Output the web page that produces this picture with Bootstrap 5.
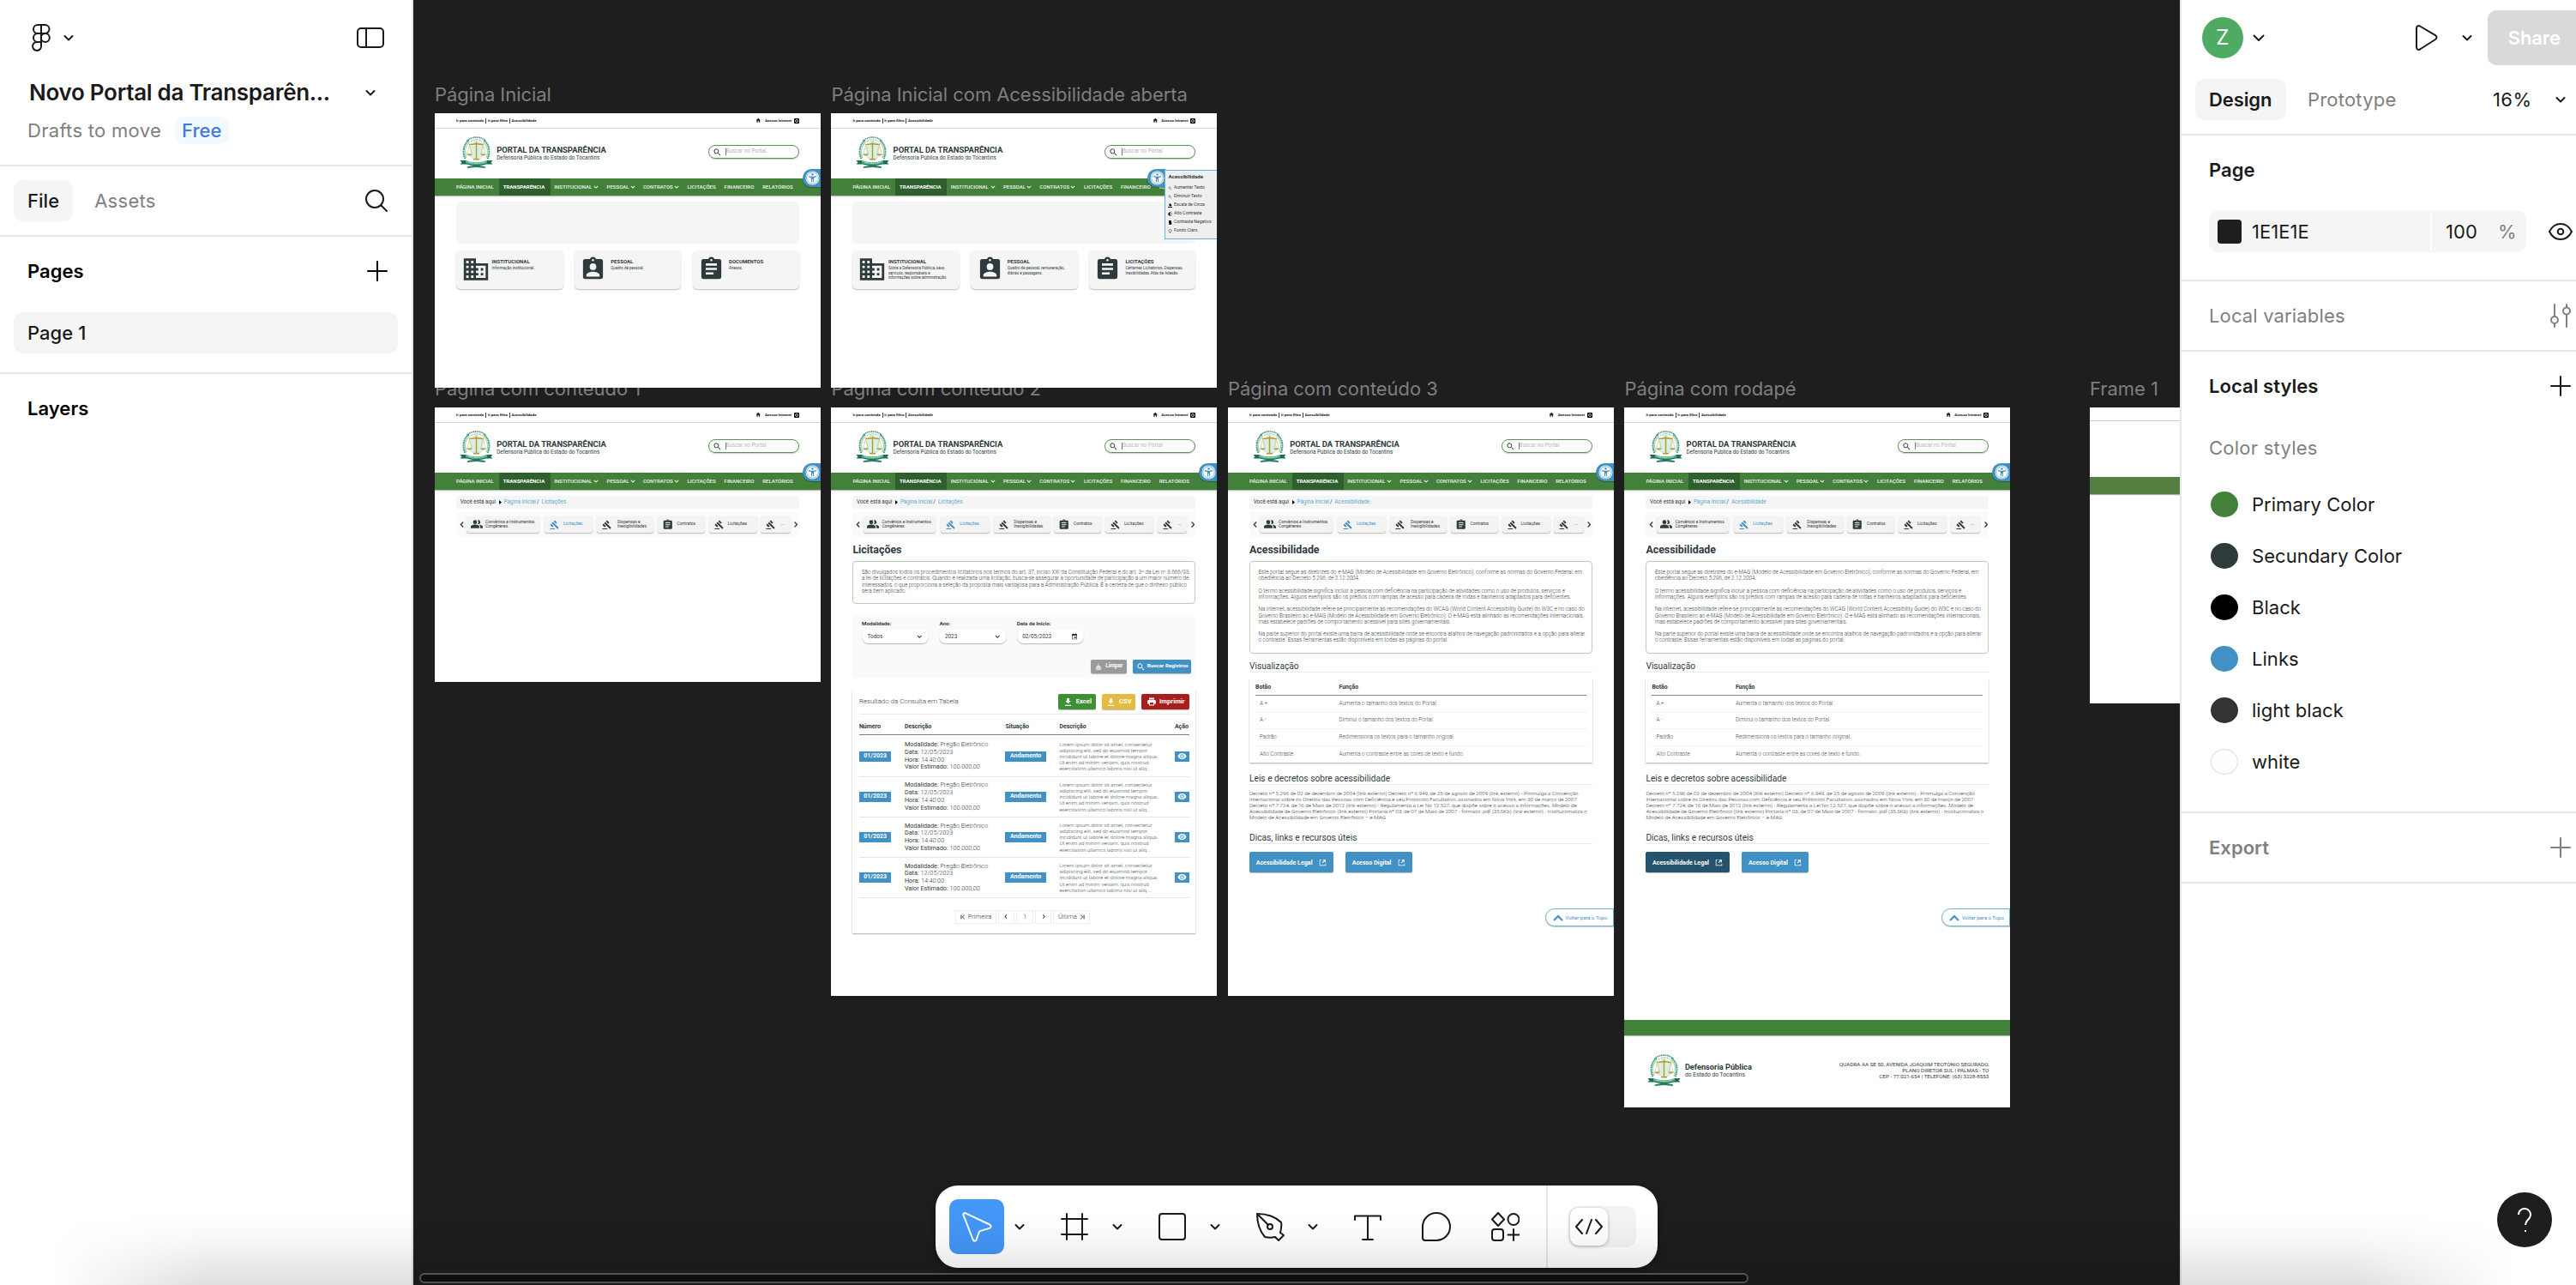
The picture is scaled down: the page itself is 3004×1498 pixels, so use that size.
<!DOCTYPE html>
<html lang="pt-BR">
<head>
<meta charset="utf-8">
<title>Novo Portal da Transparência</title>
<link href="https://cdn.jsdelivr.net/npm/bootstrap@5.3.0/dist/css/bootstrap.min.css" rel="stylesheet">
<style>
:root{--ink:#1a1a1a;--dim:#808080;--rule:#e6e6e6;--chip:#f5f5f5;--green:#43803a;--blue:#4191c4;--slate:#2f3a3c}
html,body{height:100%;margin:0}
body{font-family:Inter,"Liberation Sans",sans-serif;font-size:22px;line-height:32px;color:var(--ink);overflow:hidden;background:#1e1e1e;letter-spacing:.04px}
svg{display:block;flex:none}
.ln{fill:none;stroke:currentColor;stroke-width:2;stroke-linecap:round;stroke-linejoin:round}
.fw-mid{font-weight:550}
.dim{color:var(--dim)}
.app{width:3004px;height:1498px}
.side{background:#fff;flex:none}
.side-l{width:482px;border-right:2px solid var(--rule)}
.side-r{width:462px;border-left:2px solid var(--rule);overflow:hidden}
.side-r .wide{width:476px}
.sec{border-bottom:2px solid var(--rule)}
.pill{height:48px;padding:8px 16px;border-radius:10px;background:var(--chip)}
.filehead{height:194px;padding:0 32px}
.doc-title{font-size:26px;font-weight:600;letter-spacing:-.29px;color:var(--ink)}
.plan{background:#f2f9ff;color:#3d7be0;border-radius:10px;padding:0 8px;height:32px;font-weight:500}
.dot{width:32px;height:30px;border-radius:50%;margin:0 16px 0 2px}
.style-row{height:60px}
.stage{position:relative;overflow:hidden;background:#1e1e1e}
.tag{position:absolute;color:#7e7e7e;white-space:nowrap;font-size:22px;line-height:28px;letter-spacing:-.06px}
/* mock pages */
.pg{position:absolute;width:450px;background:#fff;overflow:hidden;font-family:Roboto,sans-serif;letter-spacing:0;color:var(--slate);font-size:6.25px;line-height:7.2px;white-space:nowrap}
.in{padding:0 25px}
.pg-top{height:18px;border-bottom:1px solid #d5d5d5;font-size:4.4px;font-weight:700;color:#222;line-height:6px}
.pg-top .bar{width:.6px;height:6px;background:#444;margin:0 2px}
.pg-brand{height:58px}
.pg-brand .ttl{font-size:9.45px;font-weight:700;line-height:10px}
.pg-brand .sub{font-size:6.3px;line-height:9px}
.find{width:106.5px;height:16.5px;border:1px solid #5b9354;border-radius:9px;box-shadow:0 1px 1px #0003;color:#b5b5b5;font-size:6.35px;margin-top:3px}
.caret{border-left:.6px solid #777;padding-left:0}
.pg-nav{height:20px;background:var(--green);color:#f0f6ef;font-weight:500;font-size:6.05px;box-shadow:0 1px 1.2px #0005;position:relative}
.pg-nav span{display:flex;align-items:center;height:20px}
.pg-nav .on{background:#2f5f2d;font-weight:700;color:#fff}
.a11y{position:absolute;top:65px;height:21px;width:21px;right:0;background:var(--blue);border-radius:11px 0 0 11px;display:flex;align-items:center;padding-left:3px;box-shadow:0 1px 1px #0004}
.hero{height:48.5px;border-radius:5px;background:#f5f5f5;margin-top:7px}
.tile{width:124.5px;height:44.5px;border-radius:5px;background:#f5f5f5;box-shadow:0 1px 1.5px #0004;padding:8.5px 0 0 8.5px}
.tile b{font-size:6px;line-height:8px;display:block}
.tile small{font-size:4.5px;line-height:5.5px;display:block;margin-top:1.5px}
.menu{position:absolute;left:389px;top:65.5px;width:61.5px;height:81.5px;background:#efefef;border:1px solid #6cb1d6;padding:3px 3px}
.menu b{font-size:6.2px;line-height:8px;display:block;margin-bottom:4.5px}
.menu div{height:10px;font-size:5.1px;gap:1.6px}
.crumb{height:15px;margin-top:7px;background:#f5f5f5;border-radius:3px;padding:0 4.7px;font-size:6.3px}
.crumb .lnk{color:#5aa9d1;text-decoration:none}
.strip{height:28px;margin-top:4.3px;background:#fafafa;padding:0 2.5px 0 3px}
.chip{height:19.6px;background:#f3f3f3;border-radius:3px;box-shadow:0 1px 1.2px #0004;font-size:4.95px;line-height:5.7px;gap:3.2px;flex:none}
.h-a{font-size:12.4px;line-height:15px;font-weight:700;margin:7.4px 0 0}
.boxed{border:1px solid #b5d2b1;border-radius:4px;padding:9px 9.5px;font-weight:300;font-size:6.29px;margin-top:6.5px}
.boxed p{margin:0 0 7.2px}
.filt{height:73.3px;background:#fafafa;margin-top:13px;border-radius:3px;padding:7px 5px 5px 10.7px;font-size:6.2px}
.sel{width:78.3px;height:16px;border-radius:8px;background:#fff;box-shadow:0 1px 1.2px #0004;padding:0 6.5px;margin-top:3.5px;font-size:6.4px}
.fcol{margin-right:12px}
.bt{color:#fff;font-weight:700;border-radius:2px;box-shadow:0 1px 1px #0004;display:flex;align-items:center;justify-content:center;gap:4px;flex:none}
.bt.go{height:23.6px;background:var(--blue);font-size:7.1px;gap:7.5px}
.sheet{box-shadow:0 1px 1.5px #0005}
.res{height:284.7px;margin-top:13px;padding:6px 7px 0 7.5px}
.cols{display:grid;grid-template-columns:53px 117.5px 63px 134.5px 17.5px}
.cols.hd{font-weight:700;font-size:7px;height:24.5px;border-bottom:1px solid #777c7d;padding-top:11px}
.cols.rw{height:47.1px;border-bottom:1px solid #e6e6e6;align-items:center}
.det{font-size:7.25px;line-height:8.7px;font-weight:300}
.lor{font-size:6.12px;line-height:7.17px;font-weight:300;color:#444f51}
.tagb{background:var(--blue);color:#fff;font-weight:700;height:12.3px;font-size:7px;display:flex;align-items:center;justify-content:center}
.pgn span{border:1px solid #eee;height:16.5px;display:flex;align-items:center;justify-content:center;gap:3px;font-weight:300;font-size:7.6px}
.h-b{font-size:10.2px;line-height:12px;font-weight:400;border-bottom:1px solid #e9e9e9;margin:0}
.tbl{padding:0 7px;height:98px;margin-top:7.7px}
.tbl .r{display:grid;grid-template-columns:92.5px 1fr;height:19.5px;align-items:center;border-bottom:1px solid #eee;padding-left:5px;font-weight:300;color:#3c4648;font-size:6.3px}
.tbl .r.first{height:19.8px;font-weight:700;font-size:6.9px;padding-left:0;grid-template-columns:97.5px 1fr;border-bottom:1px solid #888;padding-top:2px;color:var(--slate)}
.tbl .r:last-child{border:0}
.laws{font-weight:300;font-size:6.26px;margin-top:7px}
.topo{position:absolute;right:0;top:584.3px;width:80px;height:21px;border:1px solid #6cb1d6;border-radius:11px 0 0 11px;color:var(--blue);font-size:6px;gap:3px;box-shadow:0 1px 1px #0003;background:#fff}
.foot{position:absolute;left:0;right:0;bottom:0;height:102.3px}
.foot .band{height:18px;background:var(--green);box-shadow:0 1px 1px #0004}
/* floating tools */
.tools{position:absolute;left:609px;top:1382px;width:842px;height:96px;border-radius:26px;background:#fff;box-shadow:0 2px 10px #0006}
.tb{width:64px;height:64px;border-radius:10px;display:flex;align-items:center;justify-content:center;flex:none}
.cv{width:36px;display:flex;justify-content:center}
.hscroll{position:absolute;left:7px;top:1484px;width:1550px;height:12px;border:2px solid #5c5c5c;border-radius:6px;background:#111}
.dusk{position:fixed;left:0;right:0;bottom:0;height:80px;background:linear-gradient(#0000,#00000008 35%,#00000020);-webkit-mask-image:linear-gradient(90deg,#0000 60px,#000 240px,#000 2740px,#0000 2930px);pointer-events:none}
.help{position:fixed;left:2912px;top:1390px;width:64px;height:64px;border-radius:50%;background:#1e1e1e;color:#fff}
</style>
<script src="https://cdn.jsdelivr.net/npm/bootstrap@5.3.0/dist/js/bootstrap.bundle.min.js"></script>
</head>
<body>
<svg width="0" height="0" style="position:absolute">
<defs>
<symbol id="chev" viewBox="0 0 16 16"><path class="ln" d="M3.5 6 8 10.5 12.5 6"/></symbol>
<symbol id="plus" viewBox="0 0 24 24"><path class="ln" d="M12 1v22M1 12h22"/></symbol>
<symbol id="ar" viewBox="6 5 11 14"><path fill="currentColor" d="M8.200 17 13.200 12 8.200 7 10 5.200l6.800 6.800L10 18.800z"/></symbol>
<symbol id="al" viewBox="6 5 11 14"><path fill="currentColor" d="M15.400 17 10.400 12l5-5-1.800-1.800L6.800 12l6.800 6.800z"/></symbol>
<symbol id="ad" viewBox="0 0 24 24"><path fill="currentColor" d="M6.400 7.400 12 13l5.600-5.600 2 2L12 17 4.400 9.400z"/></symbol>
<symbol id="home" viewBox="0 0 24 24"><path fill="currentColor" d="M10 21v-6h4v6h5v-9h3L12 2.500 2 12h3v9z"/></symbol>
<symbol id="glass" viewBox="0 0 24 24"><path fill="currentColor" d="M15.500 14h-.8l-.3-.3A6.500 6.500 0 1 0 13.700 14.400l.3.3v.8l5 5 1.500-1.500zm-6 0a4.500 4.500 0 1 1 0-9 4.500 4.500 0 0 1 0 9z"/></symbol>
<symbol id="building" viewBox="0 0 24 24"><path fill="currentColor" fill-rule="evenodd" d="M12 7V3H2v18h20V7zM6 19H4v-2h2zm0-4H4v-2h2zm0-4H4V9h2zm0-4H4V5h2zm4 12H8v-2h2zm0-4H8v-2h2zm0-4H8V9h2zm0-4H8V5h2zm10 12h-8v-2h2v-2h-2v-2h2v-2h-2V9h8zm-2-8h-2v2h2zm0 4h-2v2h2z"/></symbol>
<symbol id="badge-p" viewBox="0 0 24 24"><path fill="currentColor" fill-rule="evenodd" d="M19 3h-4.200a3 3 0 0 0-5.600 0H5a2 2 0 0 0-2 2v14a2 2 0 0 0 2 2h14a2 2 0 0 0 2-2V5a2 2 0 0 0-2-2zm-7 0a1 1 0 1 1 0 2 1 1 0 0 1 0-2zm0 4a3 3 0 1 1 0 6 3 3 0 0 1 0-6zm6 12H6v-1.400c0-2 4-3.100 6-3.100s6 1.100 6 3.100z"/></symbol>
<symbol id="clip" viewBox="0 0 24 24"><path fill="currentColor" fill-rule="evenodd" d="M19 3h-4.200a3 3 0 0 0-5.600 0H5a2 2 0 0 0-2 2v14a2 2 0 0 0 2 2h14a2 2 0 0 0 2-2V5a2 2 0 0 0-2-2zm-7 0a1 1 0 1 1 0 2 1 1 0 0 1 0-2zm2 14H7v-2h7zm3-4H7v-2h10zm0-4H7V7h10z"/></symbol>
<symbol id="people" viewBox="0 0 24 24"><path fill="currentColor" d="M16.700 13.100c1.400 1 2.300 2.200 2.300 3.900v3h5v-3c0-2.200-3.600-3.500-7.300-3.900zM15 12a4 4 0 1 0-1.300-7.800 6 6 0 0 1 0 7.600c.4.100.8.200 1.300.2z"/><circle fill="currentColor" cx="8.500" cy="8" r="4"/><path fill="currentColor" d="M8.500 13C5.500 13 0 14.300 0 17v3h17v-3c0-2.700-5.500-4-8.500-4z"/></symbol>
<symbol id="gavel" viewBox="0 0 24 24"><path fill="currentColor" d="M1 21h12v2H1zM5.200 8.100l2.900-2.900 14.100 14.100-2.800 2.900zM12.300 1l5.700 5.700-2.900 2.800L9.500 3.800zM3.800 9.500l5.700 5.600L6.600 18 1 12.300z"/></symbol>
<symbol id="down" viewBox="0 0 24 24"><path fill="currentColor" d="M19 9h-4V2H9v7H5l7 7zM4 19v3h16v-3z"/></symbol>
<symbol id="print" viewBox="0 0 24 24"><path fill="currentColor" fill-rule="evenodd" d="M19 8H5a3 3 0 0 0-3 3v6h4v4h12v-4h4v-6a3 3 0 0 0-3-3zm-3 11H8v-5h8zM18 3H6v4h12z"/></symbol>
<symbol id="eye" viewBox="0 0 24 24"><path fill="currentColor" fill-rule="evenodd" d="M12 4.500C7 4.500 2.700 7.600 1 12c1.700 4.400 6 7.500 11 7.500s9.300-3.100 11-7.500c-1.700-4.400-6-7.500-11-7.500zM12 17a5 5 0 1 1 0-10 5 5 0 0 1 0 10zm0-8a3 3 0 1 0 0 6 3 3 0 0 0 0-6z"/></symbol>
<symbol id="ext" viewBox="0 0 24 24"><path fill="currentColor" d="M8 3H2v19h20v-6h-2v4H4V5h4zM12 3v2.500h4L10 12l2 2 6.500-6.500V12H21V3z"/></symbol>
<symbol id="broom" viewBox="0 0 24 24"><path fill="none" stroke="currentColor" stroke-width="2.400" d="M12 1v9M7 11h10v4H7zM4 15h16v7H4zM9 18v4M14.500 18v4"/></symbol>
<symbol id="cal" viewBox="0 0 24 24"><path fill="currentColor" fill-rule="evenodd" d="M3 3h4V1h2v2h6V1h2v2h4v19H3zm2 6v11h14V9zm6 4h6v5h-6z"/></symbol>
<symbol id="man" viewBox="0 0 32 32"><circle cx="16" cy="16" r="15" fill="#fff"/><circle cx="16" cy="16" r="12.800" fill="none" stroke="#4191c4" stroke-width="1.300"/><circle cx="16" cy="8.500" r="2.300" fill="#4191c4"/><path fill="#4191c4" d="M7.500 11.500 14 12.500h4l6.500-1v2.300L19 15v10h-2v-6h-2v6h-2V15l-5.500-1.200z"/></symbol>
<symbol id="crest" viewBox="0 0 78 78">
<path d="M13 54C5 37 10 19 22 11" fill="none" stroke="#3f9a76" stroke-width="4" stroke-dasharray="3 1"/>
<path d="M65 54c8-17 3-35-9-43" fill="none" stroke="#3f9a76" stroke-width="4" stroke-dasharray="3 1"/>
<path d="M16 52c-6-14-3-28 7-37M62 52c6-14 3-28-7-37" fill="none" stroke="#a8d8c3" stroke-width="3"/>
<path d="M17 13C28 1 50 1 61 13" fill="none" stroke="#4d8a70" stroke-width="3.500" stroke-dasharray="2.200 1.300"/>
<path d="M26 14c9-6 18-6 27 0" fill="none" stroke="#7eb39c" stroke-width="2" stroke-dasharray="2 1"/>
<path d="m34 14 6-3 4 5 7 2 4 8-2 9 3 9-7 10H32l-8-6 2-12-2-9 7-5z" fill="#daf0e6" stroke="#a9d9c4"/>
<path d="M39 15v40M22 21q8 0 17-2 9 2 17 2" fill="none" stroke="#b59a2c" stroke-width="3"/>
<path d="m23 21-5 22m5-22 6 22M55 21l-6 22m6-22 5 22" fill="none" stroke="#cdbb6a" stroke-width="1.200"/>
<path d="M16 43h14c-2 5-12 5-14 0zM48 43h14c-2 5-12 5-14 0zM32 54h14v3H32z" fill="#b59a2c"/>
<path d="M1 58h14l3 4q21 7 42 0l3-4h14l-4 5 4 4H62q-23 7-46 0H1l4-4z" fill="#1e6e50"/>
<path d="M14 58q25 9 50 0v6q-25 8-50 0z" fill="#58b390"/>
<path d="M20 62q19 6 38 0" fill="none" stroke="#e4f5ee" stroke-width="1.500" stroke-dasharray="3 2"/>
<path d="m19 72 20-3 20 3 1 4-21-2-22 2z" fill="#2a7d5c"/>
</symbol>
</defs>
</svg>

<template id="tpl-head">
  <div class="pg-top in d-flex align-items-center">
    <span>Ir para conteúdo</span><i class="bar"></i><span>Ir para filtro</span><i class="bar"></i><span>Acessibilidade</span>
    <svg class="ms-auto" width="6.500" height="6.500"><use href="#home"/></svg>
    <span style="margin:0 3px 0 4px">Acesso Intranet</span>
    <svg width="6" height="6" viewBox="0 0 12 12"><rect width="12" height="12" rx="2"/><circle cx="6" cy="6" r="3" fill="none" stroke="#fff" stroke-width="1.500"/></svg>
  </div>
  <div class="pg-brand in d-flex align-items-center">
    <svg width="39" height="39" style="margin:-3px 4.700px 0 3.500px"><use href="#crest"/></svg>
    <div><div class="ttl">PORTAL DA TRANSPARÊNCIA</div><div class="sub">Defensoria Pública do Estado do Tocantins</div></div>
    <div class="find ms-auto d-flex align-items-center" style="margin-top:-4px"><svg width="11" height="11" style="margin:0 4px 0 4px" color="#2f3a3c"><use href="#glass"/></svg><span class="caret">Buscar no Portal</span></div>
  </div>
  <div class="pg-nav d-flex">
    <span style="width:75px;padding-left:25px">PÁGINA INICIAL</span><span class="on" style="width:60px;padding-left:4.700px">TRANSPARÊNCIA</span>
    <span style="width:61.300px;padding-left:4.300px">INSTITUCIONAL<svg width="8" height="8" style="margin-left:1px"><use href="#ad"/></svg></span>
    <span style="width:42.300px;padding-left:4.300px">PESSOAL<svg width="8" height="8"><use href="#ad"/></svg></span>
    <span style="width:51.700px;padding-left:4.300px">CONTRATOS<svg width="8" height="8"><use href="#ad"/></svg></span>
    <span style="width:43px;padding-left:4.300px">LICITAÇÕES</span><span style="width:44.700px;padding-left:4.300px">FINANCEIRO</span><span style="padding-left:4.300px">RELATÓRIOS</span>
  </div>
  <div class="a11y"><svg width="17" height="17"><use href="#man"/></svg></div>
</template>

<template id="tpl-strip">
  <div class="strip d-flex align-items-center">
    <svg width="5.500" height="7" style="margin:0 3px 0 .8px"><use href="#al"/></svg>
    <div class="chip d-flex align-items-center" style="width:84.300px;padding-left:4.500px;margin-right:6.500px"><svg width="14" height="14"><use href="#people"/></svg><span>Convênios e Instrumentos<br>Congêneres</span></div>
    <div class="chip d-flex align-items-center" style="width:56.300px;padding-left:6px;margin-right:5px;gap:4.300px;color:#4191c4"><svg width="11.500" height="11.500"><use href="#gavel"/></svg><span>Licitações</span></div>
    <div class="chip d-flex align-items-center" style="width:66px;padding-left:6px;margin-right:4.700px;gap:6px"><svg width="11.500" height="11.500"><use href="#gavel"/></svg><span>Dispensas e<br>Inexigibilidades</span></div>
    <div class="chip d-flex align-items-center" style="width:55px;padding-left:5px;margin-right:4.700px;gap:4px"><svg width="13.500" height="13.500"><use href="#clip"/></svg><span>Contratos</span></div>
    <div class="chip d-flex align-items-center" style="width:56.300px;padding-left:6px;margin-right:4.300px;gap:4.300px"><svg width="11.500" height="11.500"><use href="#gavel"/></svg><span>Licitações</span></div>
    <div class="chip d-flex align-items-center" style="width:34.300px;padding-left:6px;gap:6px"><svg width="11.500" height="11.500"><use href="#gavel"/></svg><span>...</span></div>
    <svg width="5.500" height="7" style="margin-left:3.500px"><use href="#ar"/></svg>
  </div>
</template>

<template id="tpl-row">
  <div class="cols rw">
    <span class="tagb" style="width:37.500px">01/2023</span>
    <div class="det"><b>Modalidade:</b> Pregão Eletrônico<br><b>Data:</b> 12/05/2023<br><b>Hora:</b> 14:40:00<br><b>Valor Estimado:</b> 100.000,00</div>
    <span class="tagb" style="width:47.300px">Andamento</span>
    <div class="lor">Lorem ipsum dolor sit amet, consectetur<br>adipiscing elit, sed do eiusmod tempor<br>incididunt ut labore et dolore magna aliqua.<br>Ut enim ad minim veniam, quis nostrud<br>exercitation ullamco laboris nisi ut aliq...</div>
    <span class="tagb"><svg width="11" height="11"><use href="#eye"/></svg></span>
  </div>
</template>

<template id="tpl-acess">
  <h2 class="h-a">Acessibilidade</h2>
  <div class="boxed" style="height:107.600px">
    <p>Este portal segue as diretrizes do e-MAG (Modelo de Acessibilidade em Governo Eletrônico), conforme as normas do Governo Federal, em<br>obediência ao Decreto 5.296, de 2.12.2004.</p>
    <p>O termo acessibilidade significa incluir a pessoa com deficiência na participação de atividades como o uso de produtos, serviços e<br>informações. Alguns exemplos são os prédios com rampas de acesso para cadeira de rodas e banheiros adaptados para deficientes.</p>
    <p>Na internet, acessibilidade refere-se principalmente às recomendações do WCAG (World Content Accessibility Guide) do W3C e no caso do<br>Governo Brasileiro ao e-MAG (Modelo de Acessibilidade em Governo Eletrônico). O e-MAG está alinhado as recomendações internacionais,<br>mas estabelece padrões de comportamento acessível para sites governamentais.</p>
    <p>Na parte superior do portal existe uma barra de acessibilidade onde se encontra atalhos de navegação padronizados e a opção para alterar<br>o contraste. Essas ferramentas estão disponíveis em todas as páginas do portal.</p>
  </div>
  <h3 class="h-b" style="margin-top:8.800px">Visualização</h3>
  <div class="tbl sheet">
    <div class="r first"><span>Botão</span><span>Função</span></div>
    <div class="r"><span>A +</span><span>Aumenta o tamanho dos textos do Portal.</span></div>
    <div class="r"><span>A -</span><span>Diminui o tamanho dos textos do Portal.</span></div>
    <div class="r"><span>Padrão</span><span>Redimensiona os textos para o tamanho original.</span></div>
    <div class="r"><span>Alto Contraste</span><span>Aumenta o contraste entre as cores de texto e fundo.</span></div>
  </div>
  <h3 class="h-b" style="margin-top:12.300px">Leis e decretos sobre acessibilidade</h3>
  <div class="laws">Decreto nº 5.296 de 02 de dezembro de 2004 (link externo) Decreto nº 6.949, de 25 de agosto de 2009 (link externo) - Promulga a Convenção<br>Internacional sobre os Direitos das Pessoas com Deficiência e seu Protocolo Facultativo, assinados em Nova York, em 30 de março de 2007<br>Decreto nº 7.724, de 16 de Maio de 2012 (link externo) - Regulamenta a Lei No 12.527, que dispõe sobre o acesso a informações. Modelo de<br>Acessibilidade de Governo Eletrônico (link externo) Portaria nº 03, de 07 de Maio de 2007 - formato .pdf (35,5Kb) (link externo) - Institucionaliza o<br>Modelo de Acessibilidade em Governo Eletrônico – e-MAG</div>
  <h3 class="h-b" style="margin-top:13px">Dicas, links e recursos úteis</h3>
  <div class="d-flex" style="margin-top:9.800px;gap:14.300px">
    <div class="bt go legal" style="width:97.700px">Acessibilidade Legal<svg width="9" height="9"><use href="#ext"/></svg></div>
    <div class="bt go" style="width:77.700px">Acesso Digital<svg width="9" height="9"><use href="#ext"/></svg></div>
  </div>
  <div class="topo d-flex align-items-center"><svg width="12" height="12" viewBox="0 0 12 12" style="margin-left:7.500px"><path d="M1 9 6 4l5 5" fill="none" stroke="currentColor" stroke-width="2.200"/></svg>Voltar para o Topo</div>
</template>

<div class="app d-flex">
  <aside class="side side-l">
    <div class="sec filehead">
      <div class="d-flex align-items-center" style="height:88px">
        <svg width="28" height="36" viewBox="0 0 28 36" class="ln" style="margin-left:2px"><path d="M14 3h-4a5 5 0 0 0 0 10h4zM14 3h4.500a5 5 0 0 1 0 10H14zM14 13h-4a5 5 0 0 0 0 10h4zM14 23h-4a5 5 0 1 0 4 5.500z"/><circle cx="18.800" cy="18" r="5"/></svg>
        <svg width="16" height="16" style="margin-left:10px"><use href="#chev"/></svg>
        <svg class="ln ms-auto" width="32" height="24" viewBox="0 0 32 24"><rect x="1" y="1" width="30" height="22" rx="4"/><path d="M11 1v22"/></svg>
      </div>
      <div class="d-flex align-items-center" style="height:40px;padding-left:2px"><span class="doc-title">Novo Portal da Transparên...</span><svg class="ms-auto" width="16" height="16" style="margin-right:8px"><use href="#chev"/></svg></div>
      <div class="d-flex align-items-center" style="margin-top:8px"><span class="dim" style="width:172px;letter-spacing:.3px">Drafts to move</span><span class="plan">Free</span></div>
    </div>
    <div class="sec d-flex align-items-center" style="height:82px;padding:0 28px 0 16px"><span class="pill fw-mid">File</span><span class="dim" style="margin-left:25px;letter-spacing:.3px">Assets</span>
      <svg class="ln ms-auto" width="26" height="26" viewBox="0 0 26 26"><circle cx="11" cy="11" r="10"/><path d="m18.500 18.500 6.500 6.500"/></svg></div>
    <div class="sec" style="height:160px;padding:0 16px">
      <div class="d-flex align-items-center fw-semibold text-black" style="height:80px;padding:0 12px 0 16px">Pages<svg class="ms-auto" width="24" height="24"><use href="#plus"/></svg></div>
      <div class="pill fw-mid" style="margin-top:8px">Page 1</div>
    </div>
    <div class="d-flex align-items-center fw-semibold text-black" style="height:80px;padding:0 32px">Layers</div>
  </aside>

  <main class="stage flex-grow-1">
    <span class="tag" style="left:25px;top:96px">Página Inicial</span>
    <span class="tag" style="left:487.400px;top:96px">Página Inicial com Acessibilidade aberta</span>
    <span class="tag" style="left:25px;top:439px">Página com conteúdo 1</span>
    <span class="tag" style="left:487.400px;top:439px">Página com conteúdo 2</span>
    <span class="tag" style="left:950px;top:439px">Página com conteúdo 3</span>
    <span class="tag" style="left:1412.400px;top:439px">Página com rodapé</span>
    <span class="tag" style="left:1955px;top:439px">Frame 1</span>

    <section class="pg" style="left:25px;top:132px;height:320px">
      <div data-use="tpl-head"></div>
      <div class="in"><div class="hero"></div>
        <div class="d-flex justify-content-between" style="margin-top:8.500px">
          <div class="tile d-flex"><svg width="34" height="34" style="margin:-4px 2px 0 -3px"><use href="#building"/></svg><div><b>INSTITUCIONAL</b><small>Informação institucional.</small></div></div>
          <div class="tile d-flex"><svg width="31" height="31" style="margin:-2.500px 5px 0 -2px"><use href="#badge-p"/></svg><div><b>PESSOAL</b><small>Quadro de pessoal.</small></div></div>
          <div class="tile d-flex"><svg width="31" height="31" style="margin:-2.500px 5px 0 -2px"><use href="#clip"/></svg><div><b>DOCUMENTOS</b><small>Anexos.</small></div></div>
        </div></div>
    </section>

    <section class="pg" style="left:487.400px;top:132px;height:320px">
      <div data-use="tpl-head" class="opened"></div>
      <div class="in"><div class="hero"></div>
        <div class="d-flex justify-content-between" style="margin-top:8.500px">
          <div class="tile d-flex"><svg width="34" height="34" style="margin:-4px 2px 0 -3px"><use href="#building"/></svg><div><b>INSTITUCIONAL</b><small>Sobre a Defensoria Pública, seus<br>serviços, responsáveis e<br>informações sobre administração.</small></div></div>
          <div class="tile d-flex"><svg width="31" height="31" style="margin:-2.500px 5px 0 -2px"><use href="#badge-p"/></svg><div><b>PESSOAL</b><small>Quadro de pessoal, remuneração,<br>diárias e passagens.</small></div></div>
          <div class="tile d-flex"><svg width="31" height="31" style="margin:-2.500px 5px 0 -2px"><use href="#clip"/></svg><div><b>LICITAÇÕES</b><small>Certames Licitatórios, Dispensas,<br>Inexibilidades, Atas de Adesão.</small></div></div>
        </div></div>
      <div class="menu"><b>Acessibilidade</b>
        <div class="d-flex align-items-center"><svg width="5" height="5"><use href="#glass"/></svg>Aumentar Texto</div>
        <div class="d-flex align-items-center"><svg width="5" height="5"><use href="#glass"/></svg>Diminuir Texto</div>
        <div class="d-flex align-items-center"><svg width="5" height="5" viewBox="0 0 10 10"><path d="M0 8h10v2H0zM5 0l4 5-4 2-3-3z"/></svg>Escala de Cinza</div>
        <div class="d-flex align-items-center"><svg width="5" height="5" viewBox="0 0 10 10"><circle cx="5" cy="5" r="4" fill="none" stroke="#222"/><path d="M5 1a4 4 0 0 0 0 8z"/></svg>Alto Contraste</div>
        <div class="d-flex align-items-center"><svg width="5" height="5" viewBox="0 0 10 10"><path d="M2 0h5l1 4 1 5-6 1-1-5z"/></svg>Contraste Negativo</div>
        <div class="d-flex align-items-center"><svg width="5" height="5" viewBox="0 0 10 10"><path d="M3.500 7C0 4 2 1 5 1s5 3 1.500 6zM4 9h2" fill="none" stroke="#222"/></svg>Fundo Claro</div>
      </div>
    </section>

    <section class="pg" style="left:25px;top:475px;height:320px">
      <div data-use="tpl-head"></div>
      <div class="in"><div class="crumb d-flex align-items-center" data-crumb="Licitações"></div><div data-use="tpl-strip"></div></div>
    </section>

    <section class="pg" style="left:487.400px;top:475px;height:686px">
      <div data-use="tpl-head"></div>
      <div class="in"><div class="crumb d-flex align-items-center" data-crumb="Licitações"></div><div data-use="tpl-strip"></div>
        <h2 class="h-a">Licitações</h2>
        <div class="boxed" style="height:49.400px">São divulgados todos os procedimentos licitatórios nos termos do art. 37, inciso XXI da Constituição Federal e do art. 3º da Lei nº 8.666/93,<br>a lei de licitações e contratos. Quando é realizada uma licitação, busca-se assegurar a oportunidade de participação a um maior número de<br>interessados, o que proporciona a seleção da proposta mais vantajosa para a Administração Pública. É a certeza de que o dinheiro público<br>será bem aplicado.</div>
        <div class="filt d-flex flex-column">
          <div class="d-flex">
            <div class="fcol"><b>Modalidade:</b><div class="sel d-flex align-items-center justify-content-between">Todos<svg width="8.500" height="8.500"><use href="#ad"/></svg></div></div>
            <div class="fcol"><b>Ano:</b><div class="sel d-flex align-items-center justify-content-between">2023<svg width="8.500" height="8.500"><use href="#ad"/></svg></div></div>
            <div class="fcol"><b>Data de Início:</b><div class="sel d-flex align-items-center justify-content-between">02/05/2023<svg width="8" height="8"><use href="#cal"/></svg></div></div>
          </div>
          <div class="d-flex justify-content-end mt-auto" style="gap:6.700px">
            <div class="bt" style="width:42.300px;height:15.700px;background:#9a9a9a;font-size:6.400px"><svg width="8" height="8"><use href="#broom"/></svg>Limpar</div>
            <div class="bt" style="width:68.300px;height:15.700px;background:var(--blue);font-size:6.250px;gap:2px"><svg width="11" height="11"><use href="#glass"/></svg>Buscar Registros</div>
          </div>
        </div>
        <div class="res sheet">
          <div class="d-flex align-items-center" style="height:18.300px"><span class="me-auto" style="font-size:7.900px;font-weight:300">Resultado da Consulta em Tabela</span>
            <div class="bt" style="width:44px;height:18.300px;background:#3f9035;font-size:7.700px"><svg width="11" height="11"><use href="#down"/></svg>Excel</div>
            <div class="bt" style="width:39px;height:18.300px;background:#e5bb43;font-size:7.700px;margin:0 7px"><svg width="11" height="11"><use href="#down"/></svg>CSV</div>
            <div class="bt" style="width:56px;height:18.300px;background:#a61f1c;font-size:7.700px;gap:3px"><svg width="12" height="12"><use href="#print"/></svg>Imprimir</div></div>
          <div style="border-bottom:1px solid #e9e9e9;height:5.500px"></div>
          <div class="cols hd"><span>Número</span><span>Descrição</span><span>Situação</span><span>Descrição</span><span>Ação</span></div>
          <div style="height:1.500px"></div>
          <div data-use="tpl-row"></div><div data-use="tpl-row"></div><div data-use="tpl-row"></div><div data-use="tpl-row"></div>
          <div class="pgn d-flex" style="gap:2px;margin:13.500px 0 0 112.500px">
            <span style="width:47.300px"><svg width="6" height="6" viewBox="0 0 10 10"><path d="M1.500 1v8M8 1 4 5l4 4" fill="none" stroke="#222" stroke-width="1.500"/></svg>Primeira</span><span style="width:19.300px"><svg width="4" height="5"><use href="#al"/></svg></span><span style="width:20px">1</span><span style="width:19.300px"><svg width="4" height="5"><use href="#ar"/></svg></span><span style="width:42.300px">Última<svg width="6" height="6" viewBox="0 0 10 10"><path d="M8.500 1v8M2 1l4 4-4 4" fill="none" stroke="#222" stroke-width="1.500"/></svg></span>
          </div>
        </div>
      </div>
    </section>

    <section class="pg" style="left:950px;top:475px;height:686px">
      <div data-use="tpl-head"></div>
      <div class="in"><div class="crumb d-flex align-items-center" data-crumb="Acessibilidade"></div><div data-use="tpl-strip"></div><div data-use="tpl-acess"></div></div>
    </section>

    <section class="pg with-foot" style="left:1412.400px;top:475px;height:816px">
      <div data-use="tpl-head"></div>
      <div class="in"><div class="crumb d-flex align-items-center" data-crumb="Acessibilidade"></div><div data-use="tpl-strip"></div><div data-use="tpl-acess"></div></div>
      <div class="foot"><div class="band"></div>
        <div class="in d-flex align-items-center" style="height:84px"><svg width="39" height="39" style="margin:0 5px 2px 1.500px"><use href="#crest"/></svg>
          <div><div style="font-size:9.200px;font-weight:700;line-height:10px">Defensoria Pública</div><div style="font-size:6.700px;line-height:8.500px">do Estado do Tocantins</div></div>
          <div class="ms-auto text-end" style="font-size:6.250px;line-height:7.200px">QUADRA AA SE 50, AVENIDA JOAQUIM TEOTÔNIO SEGURADO,<br>PLANO DIRETOR SUL | PALMAS - TO<br>CEP - 77.021-654 | TELEFONE: (63) 3228-8553</div></div>
      </div>
    </section>

    <section class="pg" style="left:1955px;top:475px;height:345px">
      <div style="height:16px;border-bottom:1px solid #ccc"></div><div style="height:20px;margin-top:65px;background:#557f40;box-shadow:0 1px 1px #0005"></div>
    </section>

    <div class="hscroll"></div>
    <div class="tools d-flex align-items-center" style="padding-left:16px">
      <div class="tb text-white" style="background:#4496f7"><svg class="ln" width="36" height="36" viewBox="0 0 36 36"><path d="M2.500 4.500c-.5-1.800 1-3 2.600-2.200l28 13.200c2.200 1.100 1.900 3.700-.4 4.400l-10.200 3c-1 .3-1.500.9-1.900 1.800l-3 8.500c-.9 2.300-3.300 2.200-4-.2z"/></svg></div><div class="cv"><svg width="16" height="16"><use href="#chev"/></svg></div>
      <div class="tb" style="margin-left:14px"><svg class="ln" width="32" height="32" viewBox="0 0 32 32"><path d="M7 1v30M25 1v30M1 7h30M1 25h30"/></svg></div><div class="cv"><svg width="16" height="16"><use href="#chev"/></svg></div>
      <div class="tb" style="margin-left:14px"><svg class="ln" width="32" height="32" viewBox="0 0 32 32"><rect x="1" y="1" width="30" height="30" rx="3"/></svg></div><div class="cv"><svg width="16" height="16"><use href="#chev"/></svg></div>
      <div class="tb" style="margin-left:14px"><svg class="ln" width="34" height="34" viewBox="0 0 34 34"><path d="M2 2c12 0 21 3 28 10 1 4 0 8-1 12l4 3-6 6-4-4c-4 1-8 1-12 0C5 22 2 13 2 2zM2 2l13 13"/><circle cx="17" cy="17" r="3"/></svg></div><div class="cv"><svg width="16" height="16"><use href="#chev"/></svg></div>
      <div class="tb" style="margin-left:14px"><svg class="ln" width="32" height="32" viewBox="0 0 32 32"><path d="M1 8V3.500h30V8M16 3.500V31M10 31h12"/></svg></div>
      <div class="tb" style="margin-left:16px"><svg class="ln" width="34" height="34" viewBox="0 0 34 34"><path d="M17 1a16 16 0 1 1 0 32H4a3 3 0 0 1-3-3V17A16 16 0 0 1 17 1z"/></svg></div>
      <div class="tb" style="margin-left:16px"><svg class="ln" width="34" height="34" viewBox="0 0 34 34"><path d="m9 1 7 7.500L9 16 2 8.500zM27 20v13M20.500 26.500h13"/><circle cx="27" cy="8.500" r="6.500"/><rect x="2" y="20" width="13" height="13" rx="3"/></svg></div>
      <div style="width:2px;height:96px;background:var(--rule);margin:0 26px 0 16px"></div>
      <div class="d-flex align-items-center" style="width:79px;height:48px;border-radius:12px;background:#f3f3f3;padding-left:2px;margin-left:-2px"><div class="d-flex align-items-center justify-content-center bg-white" style="width:44px;height:44px;border-radius:10px;box-shadow:0 1px 4px #0004"><svg class="ln" width="32" height="18" viewBox="0 0 32 18"><path d="M8 1 1 9l7 8M24 1l7 8-7 8M19 1l-6 16"/></svg></div></div>
    </div>
  </main>

  <aside class="side side-r"><div class="wide">
    <div class="sec" style="height:158px">
      <div class="d-flex align-items-center" style="height:88px;padding-left:24px"><span class="rounded-circle d-flex align-items-center justify-content-center text-white" style="width:48px;height:48px;background:#4fab64;font-size:24px">Z</span>
        <svg class="ln" width="20" height="20" viewBox="0 0 20 20" style="margin-left:8px"><path d="m4.500 7.500 5.500 5.500 5.500-5.500"/></svg>
        <svg class="ln" width="28" height="30" viewBox="0 0 28 30" style="margin-left:172px"><path d="M2 4c0-2.500 2-3.500 4-2.500l18 10.700c2 1.200 2 3.600 0 4.800L6 28.500C4 29.500 2 28.500 2 26z"/></svg>
        <svg width="16" height="16" style="margin-left:25px"><use href="#chev"/></svg>
        <span class="text-white fw-semibold d-flex align-items-center" style="margin-left:16px;width:120px;height:64px;border-radius:10px;background:#d9d9d9;padding-left:24px;letter-spacing:-.1px">Share</span></div>
      <div class="d-flex align-items-center" style="padding:4px 0 0 16px"><span class="pill fw-semibold" style="width:106px;letter-spacing:-.1px">Design</span><span class="dim" style="margin-left:25px;width:216px;letter-spacing:.2px">Prototype</span><span style="width:71px;letter-spacing:.4px">16%</span><svg width="16" height="16"><use href="#chev"/></svg></div>
    </div>
    <div class="sec" style="height:170px;padding-left:32px">
      <div class="d-flex align-items-center fw-semibold" style="height:80px">Page</div>
      <div class="d-flex align-items-center" style="margin-top:8px"><div class="d-flex align-items-center" style="width:370px;height:48px;background:var(--chip);border-radius:10px;padding-left:10px"><i style="width:28px;height:28px;border-radius:4px;background:#1e1e1e"></i><span style="width:210px;padding-left:12px">1E1E1E</span><i style="width:2px;height:44px;background:#fff;margin-left:10px"></i><span style="width:61px;margin-left:16px">100</span><span class="dim">%</span></div>
        <svg class="ln" width="28" height="20" viewBox="0 0 28 20" style="margin-left:26px"><path d="M1 10C4 4 9 1 14 1s10 3 13 9c-3 6-8 9-13 9S4 16 1 10z"/><circle cx="14" cy="10" r="3.300"/></svg></div>
    </div>
    <div class="sec d-flex align-items-center dim" style="height:82px;padding-left:32px"><span style="width:398px;letter-spacing:.15px">Local variables</span><svg class="ln" width="24" height="28" viewBox="0 0 24 28"><path d="M5 1v14M5 23v4M19 1v3M19 13v14"/><circle cx="5" cy="19" r="4"/><circle cx="19" cy="8.500" r="4"/></svg></div>
    <div class="sec" style="height:538px;padding-left:32px">
      <div class="d-flex align-items-center fw-semibold" style="height:80px"><span style="width:398px">Local styles</span><svg width="24" height="24"><use href="#plus"/></svg></div>
      <div class="dim d-flex align-items-center" style="height:64px;letter-spacing:.25px">Color styles</div>
      <div style="padding-top:4px">
      <div class="style-row d-flex align-items-center"><i class="dot" style="background:#43803a"></i>Primary Color</div>
      <div class="style-row d-flex align-items-center"><i class="dot" style="background:#2f3a3c"></i>Secundary Color</div>
      <div class="style-row d-flex align-items-center"><i class="dot" style="background:#000"></i>Black</div>
      <div class="style-row d-flex align-items-center"><i class="dot" style="background:#4191c4"></i>Links</div>
      <div class="style-row d-flex align-items-center"><i class="dot" style="background:#333"></i>light black</div>
      <div class="style-row d-flex align-items-center"><i class="dot" style="background:#fdfffc;border:1px solid #d8dad8"></i>white</div></div>
    </div>
    <div class="sec d-flex align-items-center dim fw-semibold" style="height:82px;padding-left:32px"><span style="width:398px">Export</span><svg width="24" height="24"><use href="#plus"/></svg></div>
  </div></aside>
</div>
<div class="dusk"></div>
<div class="help d-flex align-items-center justify-content-center"><svg width="18" height="28" viewBox="0 0 18 28"><path d="M2 8a7 7 0 1 1 12.500 4.300C12 15 10 16 10 20" fill="none" stroke="#fff" stroke-width="2"/><path fill="#fff" d="M9 26h2v2H9z"/></svg></div>

<script>
document.querySelectorAll('[data-crumb]').forEach(function(c){
  c.innerHTML='<span>Você está aqui</span><svg width="3" height="5" viewBox="0 0 3 5" style="margin:0 3px 0 3.500px"><path d="M0 0l3 2.500L0 5z"/></svg><a class="lnk">Página Inicial</a><span style="margin:0 3px 0 1px">/</span><a class="lnk">'+c.dataset.crumb+'</a>';
});
document.querySelectorAll('[data-use]').forEach(function(el){
  el.appendChild(document.getElementById(el.dataset.use).content.cloneNode(true));
});
document.querySelector('.opened .a11y').style.right='60.500px';
document.querySelector('.with-foot .legal').style.background='#25526c';
</script>
</body>
</html>
